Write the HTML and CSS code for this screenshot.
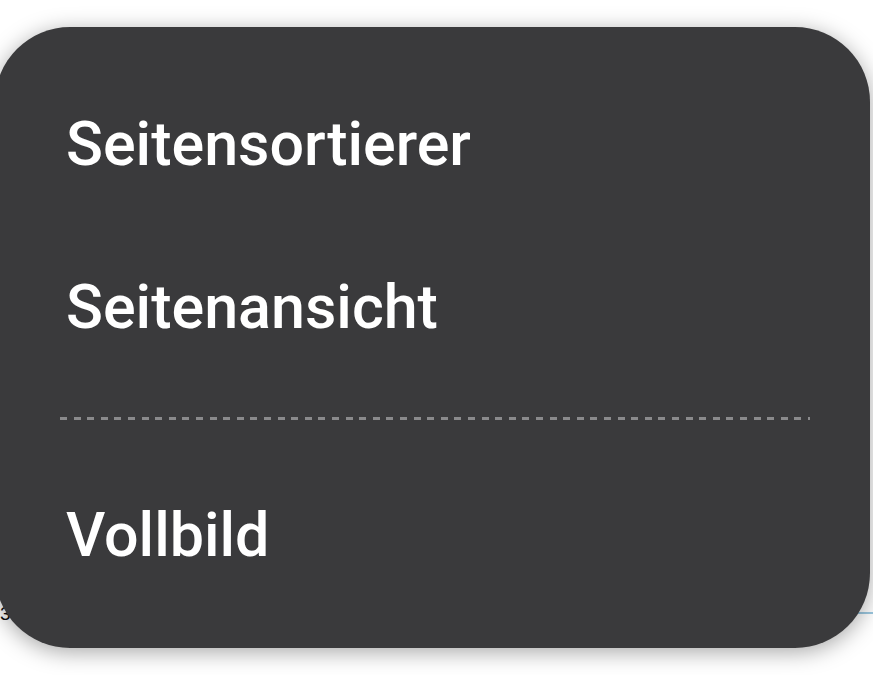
FILE: index.html
```html
<!DOCTYPE html>
<html lang="de">
<head>
<meta charset="utf-8">
<title>Menü</title>
<link rel="stylesheet" href="styles.css">
</head>
<body>
<div class="page">
  <div class="doc-line">
    <span class="doc-text">3 2</span>
    <span class="doc-rule"></span>
  </div>
</div>
<div class="menu">
  <div class="item item-first">Seitensortierer</div>
  <div class="item item-second">Seitenansicht</div>
  <div class="divider"></div>
  <div class="item item-last">Vollbild</div>
</div>
</body>
</html>
```
FILE: styles.css
```css
html, body {
  margin: 0;
  padding: 0;
  background: #ffffff;
  width: 873px;
  height: 675px;
  overflow: hidden;
}
.page {
  height: 675px;
  display: flex;
  flex-direction: column;
  justify-content: flex-start;
}
.doc-line {
  margin-top: 604px;
  display: flex;
  align-items: flex-start;
  justify-content: space-between;
}
.doc-text {
  font-family: "Liberation Sans", Arial, sans-serif;
  font-size: 19px;
  line-height: 20px;
  color: #111;
}
.doc-rule {
  width: 20px;
  height: 2px;
  background: #9cc8e0;
  margin-top: 8px;
}
.menu {
  position: absolute;
  left: -5px;
  top: 27px;
  width: 875px;
  height: 621px;
  box-sizing: border-box;
  background: #3a3a3c;
  border-radius: 75px;
  box-shadow: 0 4px 22px rgba(0, 0, 0, 0.35);
  padding: 0 0 0 71px;
  font-family: Roboto, "Noto Sans", sans-serif;
  font-weight: 500;
  color: #ffffff;
  display: flex;
  flex-direction: column;
}
.item {
  font-size: 61px;
  line-height: 1;
  letter-spacing: 0;
}
.item-first {
  margin-top: 87px;
}
.item-second {
  margin-top: 102px;
}
.divider {
  margin-top: 79px;
  margin-left: -6px;
  width: 750px;
  height: 3px;
  background: repeating-linear-gradient(to right, #8a8a8c 0 7px, transparent 7px 13.6px);
}
.item-last {
  margin-top: 85px;
}
```
